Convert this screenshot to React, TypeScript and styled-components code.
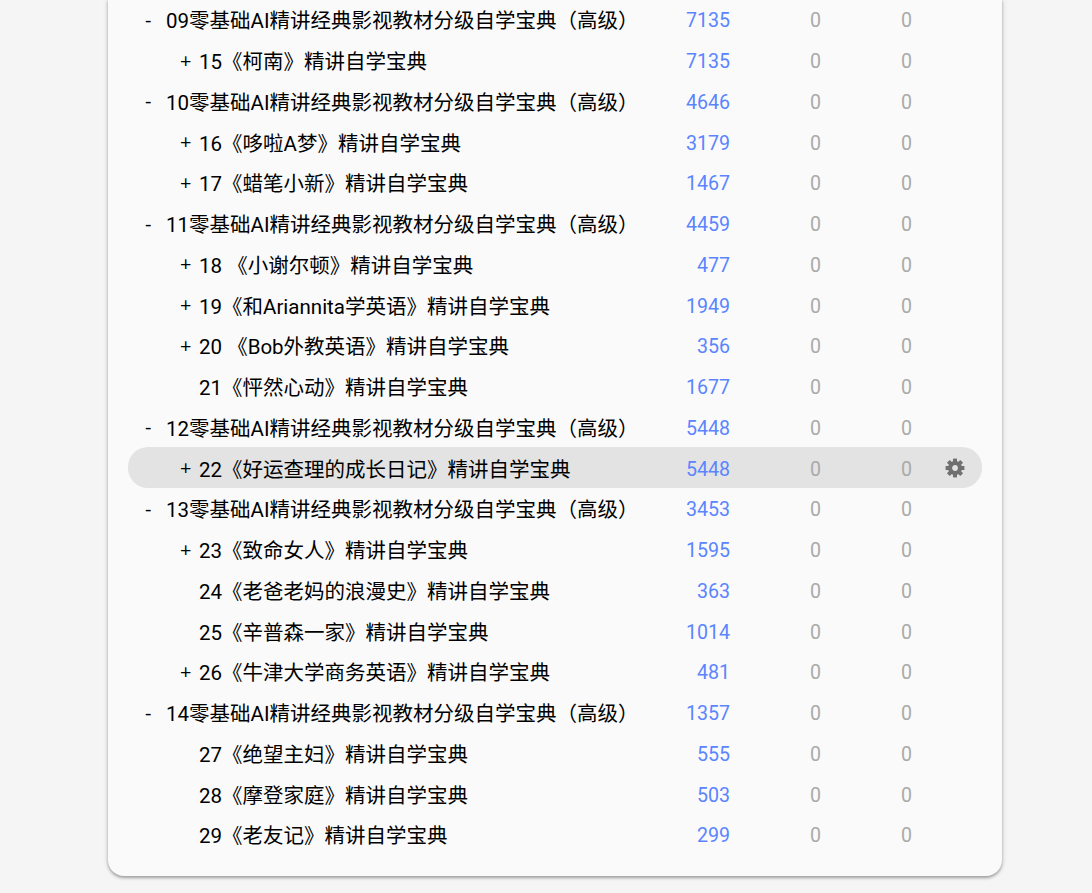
import React from 'react'
import styled, { createGlobalStyle } from 'styled-components'

const GlobalStyle = createGlobalStyle`
  html, body {
    margin: 0;
    padding: 0;
    background: #f5f5f5;
  }
  body {
    font-family: Roboto, 'Noto Sans CJK SC', sans-serif;
  }
`

const Page = styled.div`
  width: 894px;
  margin-left: 108px;
  padding-bottom: 17px;
`

const Card = styled.div`
  margin-top: -1px;
  background: #fafafa;
  border-radius: 0 0 16px 16px;
  box-shadow: 0 2px 3px rgba(0, 0, 0, 0.3), 0 0 6px rgba(0, 0, 0, 0.12);
  padding: 0 20px 21px;
`

const Row = styled.div<{ $active?: boolean }>`
  display: grid;
  grid-template-columns: 532px 70px 91px 91px 70px;
  align-items: center;
  height: 40.75px;
  font-size: 20.5px;
  color: #000;
  border-radius: 20px;
  background: ${props => (props.$active ? '#e3e3e3' : 'transparent')};
`

const NameCell = styled.div<{ $child?: boolean }>`
  display: flex;
  align-items: center;
  white-space: pre;
  padding-left: ${props => (props.$child ? '52px' : '17px')};
`

const Marker = styled.span<{ $child?: boolean }>`
  flex: none;
  font-family: 'Open Sans', sans-serif;
  font-size: 20px;
  width: ${props => (props.$child ? '19px' : '21px')};
`

const Count = styled.div`
  padding-top: 3px;
  text-align: right;
  font-size: 19.6px;
  color: #5b85ff;
`

const Zero = styled.div`
  padding-top: 3px;
  text-align: right;
  font-size: 19.6px;
  color: #aaa;
`

const GearCell = styled.div`
  display: flex;
  padding-left: 33px;
  color: #707070;
`

const GearIcon = () => (
  <svg width="20" height="20" viewBox="0 0 20 20" fill="currentColor">
    <circle cx="10" cy="10" r="5" fill="none" stroke="currentColor" strokeWidth="4.2" />
    {[0, 45, 90, 135, 180, 225, 270, 315].map(angle => (
      <rect key={angle} x="8" y="0.6" width="4" height="4" transform={`rotate(${angle} 10 10)`} />
    ))}
  </svg>
)

type Item = {
  name: string
  count: number
  child?: boolean
  marker?: string
  active?: boolean
}

const parent = (no: string, count: number): Item => ({
  name: `${no}零基础AI精讲经典影视教材分级自学宝典（高级）`,
  count,
  marker: '-',
})

const items: Item[] = [
  parent('09', 7135),
  { name: '15《柯南》精讲自学宝典', count: 7135, child: true, marker: '+' },
  parent('10', 4646),
  { name: '16《哆啦A梦》精讲自学宝典', count: 3179, child: true, marker: '+' },
  { name: '17《蜡笔小新》精讲自学宝典', count: 1467, child: true, marker: '+' },
  parent('11', 4459),
  { name: '18 《小谢尔顿》精讲自学宝典', count: 477, child: true, marker: '+' },
  { name: '19《和Ariannita学英语》精讲自学宝典', count: 1949, child: true, marker: '+' },
  { name: '20 《Bob外教英语》精讲自学宝典', count: 356, child: true, marker: '+' },
  { name: '21《怦然心动》精讲自学宝典', count: 1677, child: true },
  parent('12', 5448),
  { name: '22《好运查理的成长日记》精讲自学宝典', count: 5448, child: true, marker: '+', active: true },
  parent('13', 3453),
  { name: '23《致命女人》精讲自学宝典', count: 1595, child: true, marker: '+' },
  { name: '24《老爸老妈的浪漫史》精讲自学宝典', count: 363, child: true },
  { name: '25《辛普森一家》精讲自学宝典', count: 1014, child: true },
  { name: '26《牛津大学商务英语》精讲自学宝典', count: 481, child: true, marker: '+' },
  parent('14', 1357),
  { name: '27《绝望主妇》精讲自学宝典', count: 555, child: true },
  { name: '28《摩登家庭》精讲自学宝典', count: 503, child: true },
  { name: '29《老友记》精讲自学宝典', count: 299, child: true },
]

export default function App() {
  return (
    <Page>
      <GlobalStyle />
      <Card>
        {items.map(item => (
          <Row key={item.name + item.count} $active={item.active}>
            <NameCell $child={item.child}>
              <Marker $child={item.child}>{item.marker}</Marker>
              {item.name}
            </NameCell>
            <Count>{item.count}</Count>
            <Zero>0</Zero>
            <Zero>0</Zero>
            <GearCell>{item.active && <GearIcon />}</GearCell>
          </Row>
        ))}
      </Card>
    </Page>
  )
}
